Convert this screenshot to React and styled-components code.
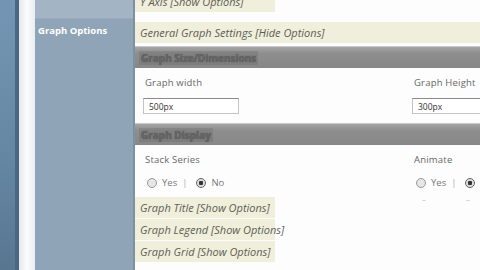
import React from 'react';
import styled, { createGlobalStyle } from 'styled-components';

const GlobalStyle = createGlobalStyle`
    html, body {
        margin: 0;
        padding: 0;
        width: 480px;
        height: 270px;
        overflow: hidden;
        background: #fdfdfd;
        font-family: "Open Sans", "DejaVu Sans", sans-serif;
    }
`;

const Screen = styled.div`
    display: flex;
    width: 480px;
    height: 270px;
    overflow: hidden;
`;

const Desktop = styled.div`
    flex-shrink: 0;
    width: 15px;
    background: linear-gradient(180deg, #7496b4 0%, #6586a3 60%, #587690 100%);
`;

const DesktopEdge = styled.div`
    flex-shrink: 0;
    width: 4px;
    background: #4b6781;
`;

const Frame = styled.div`
    flex-shrink: 0;
    width: 16px;
    background: linear-gradient(90deg, #e4e8ec 0%, #fbfcfd 50%, #e9edf0 100%);
`;

const Sidebar = styled.div`
    flex-shrink: 0;
    width: 98px;
    display: flex;
    flex-direction: column;
    background: #8fa4b6;
`;

const SidebarTop = styled.div`
    height: 18px;
    background: #a3b4c4;
    border-bottom: 1px solid #98aabb;
`;

const SidebarTitle = styled.div`
    padding: 5px 0 0 3px;
    color: #fff;
    font-size: 9.5px;
    font-weight: 700;
    line-height: 14px;
`;

const SidebarBorder = styled.div`
    flex-shrink: 0;
    width: 2px;
    background: #7d91a3;
`;

const Content = styled.div`
    flex: 1;
    min-width: 0;
    display: flex;
    flex-direction: column;
    margin-top: -9px;
    background: #fdfdfd;
`;

const Toggle = styled.div`
    flex-shrink: 0;
    height: 21px;
    width: ${p => (p.$full ? 'auto' : '135px')};
    margin-bottom: ${p => p.$gap || 1}px;
    padding-left: 5px;
    display: flex;
    align-items: center;
    background: #efefdb;
    color: #5e5e56;
    font-size: 11px;
    font-style: italic;
    white-space: nowrap;
`;

const SectionBar = styled.div`
    flex-shrink: 0;
    height: 21px;
    margin-top: ${p => p.$top || 0}px;
    display: flex;
    align-items: center;
    padding-left: 4px;
    background: linear-gradient(180deg, #a5a5a5 0%, #8e8e8e 30%, #878787 100%);
    border-top: 1px solid #c9c9c9;
`;

const SectionText = styled.span`
    font-size: 10px;
    font-weight: 700;
    color: #666;
    text-shadow: 0 0 1px #444;
    background: rgba(90, 90, 90, 0.25);
    padding: 0 2px;
`;

const Fields = styled.div`
    flex-shrink: 0;
    display: grid;
    grid-template-columns: 269px 1fr;
    padding: 8px 0 0 10px;
    height: ${p => p.$height}px;
    box-sizing: border-box;
`;

const Field = styled.div`
    display: flex;
    flex-direction: column;
`;

const Label = styled.div`
    font-size: 9.5px;
    color: #666;
    line-height: 14px;
    letter-spacing: 0.2px;
`;

const Input = styled.div`
    margin: 8px 0 0 -2px;
    width: ${p => p.$width}px;
    height: 16px;
    box-sizing: border-box;
    border: 1px solid #c4c4c4;
    border-top-color: #8a8a8a;
    background: #fff;
    font-size: 8.5px;
    color: #333;
    padding-left: 5px;
    display: flex;
    align-items: center;
`;

const RadioRow = styled.div`
    display: flex;
    align-items: center;
    gap: 4px;
    margin-top: 9px;
    font-size: 9.5px;
    color: #777;
`;

const Radio = styled.span`
    width: 8px;
    height: 8px;
    border-radius: 50%;
    border: 1px solid ${p => (p.$checked ? '#666' : '#999')};
    background: ${p => (p.$checked ? 'radial-gradient(circle, #333 0 2px, #ddd 2.5px)' : '#e6e6e6')};
    margin: 0 1px 0 2px;
`;

const Sep = styled.span`
    color: #aaa;
    margin: 0 3px 0 1px;
`;

const Dashes = styled.div`
    display: flex;
    gap: 40px;
    padding-left: 8px;
    margin-top: 4px;
    color: #bbb;
    font-size: 8px;
`;

const App = () => (
    <>
        <GlobalStyle />
        <Screen>
            <Desktop />
            <DesktopEdge />
            <Frame />
            <Sidebar>
                <SidebarTop />
                <SidebarTitle>Graph Options</SidebarTitle>
            </Sidebar>
            <SidebarBorder />
            <Content>
                <Toggle $gap={10}>Y Axis [Show Options]</Toggle>
                <Toggle $full $gap={0}>General Graph Settings [Hide Options]</Toggle>
                <SectionBar $top={2}>
                    <SectionText>Graph Size/Dimensions</SectionText>
                </SectionBar>
                <Fields $height={55}>
                    <Field>
                        <Label>Graph width</Label>
                        <Input $width={96}>500px</Input>
                    </Field>
                    <Field>
                        <Label>Graph Height</Label>
                        <Input $width={80}>300px</Input>
                    </Field>
                </Fields>
                <SectionBar>
                    <SectionText>Graph Display</SectionText>
                </SectionBar>
                <Fields $height={52}>
                    <Field>
                        <Label>Stack Series</Label>
                        <RadioRow>
                            <Radio />Yes<Sep>|</Sep>
                            <Radio $checked />No
                        </RadioRow>
                    </Field>
                    <Field>
                        <Label>Animate</Label>
                        <RadioRow>
                            <Radio />Yes<Sep>|</Sep>
                            <Radio $checked />No
                        </RadioRow>
                        <Dashes><span>–</span><span>–</span></Dashes>
                    </Field>
                </Fields>
                <Toggle>Graph Title [Show Options]</Toggle>
                <Toggle>Graph Legend [Show Options]</Toggle>
                <Toggle>Graph Grid [Show Options]</Toggle>
            </Content>
        </Screen>
    </>
);

export default App;
